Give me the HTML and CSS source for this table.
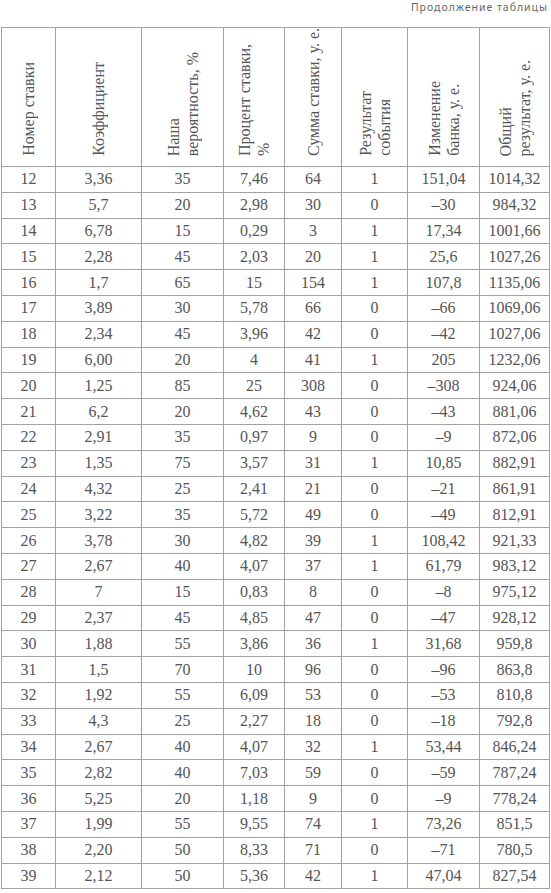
FILE: index.html
```html
<!DOCTYPE html>
<html lang="ru">
<head>
<meta charset="utf-8">
<link rel="stylesheet" href="styles.css">
</head>
<body>
<div class="caption">Продолжение таблицы</div>
<table class="data">
<colgroup>
<col class="c1"><col class="c2"><col class="c3"><col class="c4"><col class="c5"><col class="c6"><col class="c7"><col class="c8">
</colgroup>
<thead>
<tr>
<th><div class="rot">Номер ставки</div></th>
<th><div class="rot">Коэффициент</div></th>
<th><div class="rot">Наша<br>вероятность, %</div></th>
<th><div class="rot">Процент ставки,<br>%</div></th>
<th><div class="rot">Сумма ставки, у. е.</div></th>
<th><div class="rot">Результат<br>события</div></th>
<th><div class="rot">Изменение<br>банка, у. е.</div></th>
<th><div class="rot">Общий<br>результат, у. е.</div></th>
</tr>
</thead>
<tbody>
<tr><td>12</td><td>3,36</td><td>35</td><td>7,46</td><td>64</td><td>1</td><td>151,04</td><td>1014,32</td></tr>
<tr><td>13</td><td>5,7</td><td>20</td><td>2,98</td><td>30</td><td>0</td><td>–30</td><td>984,32</td></tr>
<tr><td>14</td><td>6,78</td><td>15</td><td>0,29</td><td>3</td><td>1</td><td>17,34</td><td>1001,66</td></tr>
<tr><td>15</td><td>2,28</td><td>45</td><td>2,03</td><td>20</td><td>1</td><td>25,6</td><td>1027,26</td></tr>
<tr><td>16</td><td>1,7</td><td>65</td><td>15</td><td>154</td><td>1</td><td>107,8</td><td>1135,06</td></tr>
<tr><td>17</td><td>3,89</td><td>30</td><td>5,78</td><td>66</td><td>0</td><td>–66</td><td>1069,06</td></tr>
<tr><td>18</td><td>2,34</td><td>45</td><td>3,96</td><td>42</td><td>0</td><td>–42</td><td>1027,06</td></tr>
<tr><td>19</td><td>6,00</td><td>20</td><td>4</td><td>41</td><td>1</td><td>205</td><td>1232,06</td></tr>
<tr><td>20</td><td>1,25</td><td>85</td><td>25</td><td>308</td><td>0</td><td>–308</td><td>924,06</td></tr>
<tr><td>21</td><td>6,2</td><td>20</td><td>4,62</td><td>43</td><td>0</td><td>–43</td><td>881,06</td></tr>
<tr><td>22</td><td>2,91</td><td>35</td><td>0,97</td><td>9</td><td>0</td><td>–9</td><td>872,06</td></tr>
<tr><td>23</td><td>1,35</td><td>75</td><td>3,57</td><td>31</td><td>1</td><td>10,85</td><td>882,91</td></tr>
<tr><td>24</td><td>4,32</td><td>25</td><td>2,41</td><td>21</td><td>0</td><td>–21</td><td>861,91</td></tr>
<tr><td>25</td><td>3,22</td><td>35</td><td>5,72</td><td>49</td><td>0</td><td>–49</td><td>812,91</td></tr>
<tr><td>26</td><td>3,78</td><td>30</td><td>4,82</td><td>39</td><td>1</td><td>108,42</td><td>921,33</td></tr>
<tr><td>27</td><td>2,67</td><td>40</td><td>4,07</td><td>37</td><td>1</td><td>61,79</td><td>983,12</td></tr>
<tr><td>28</td><td>7</td><td>15</td><td>0,83</td><td>8</td><td>0</td><td>–8</td><td>975,12</td></tr>
<tr><td>29</td><td>2,37</td><td>45</td><td>4,85</td><td>47</td><td>0</td><td>–47</td><td>928,12</td></tr>
<tr><td>30</td><td>1,88</td><td>55</td><td>3,86</td><td>36</td><td>1</td><td>31,68</td><td>959,8</td></tr>
<tr><td>31</td><td>1,5</td><td>70</td><td>10</td><td>96</td><td>0</td><td>–96</td><td>863,8</td></tr>
<tr><td>32</td><td>1,92</td><td>55</td><td>6,09</td><td>53</td><td>0</td><td>–53</td><td>810,8</td></tr>
<tr><td>33</td><td>4,3</td><td>25</td><td>2,27</td><td>18</td><td>0</td><td>–18</td><td>792,8</td></tr>
<tr><td>34</td><td>2,67</td><td>40</td><td>4,07</td><td>32</td><td>1</td><td>53,44</td><td>846,24</td></tr>
<tr><td>35</td><td>2,82</td><td>40</td><td>7,03</td><td>59</td><td>0</td><td>–59</td><td>787,24</td></tr>
<tr><td>36</td><td>5,25</td><td>20</td><td>1,18</td><td>9</td><td>0</td><td>–9</td><td>778,24</td></tr>
<tr><td>37</td><td>1,99</td><td>55</td><td>9,55</td><td>74</td><td>1</td><td>73,26</td><td>851,5</td></tr>
<tr><td>38</td><td>2,20</td><td>50</td><td>8,33</td><td>71</td><td>0</td><td>–71</td><td>780,5</td></tr>
<tr><td>39</td><td>2,12</td><td>50</td><td>5,36</td><td>42</td><td>1</td><td>47,04</td><td>827,54</td></tr>
</tbody>
</table>
</body>
</html>
```

FILE: styles.css
```css
html, body {
  margin: 0;
  padding: 0;
  background: #ffffff;
}

.caption {
  height: 27px;
  box-sizing: border-box;
  padding: 1px 3px 0 0;
  text-align: right;
  font-family: "Noto Sans", "DejaVu Sans", sans-serif;
  font-size: 10.5px;
  line-height: 13px;
  letter-spacing: 1px;
  color: #666666;
}

.data {
  border-collapse: collapse;
  table-layout: fixed;
  width: 548px;
  margin-left: 1px;
  font-family: "Liberation Serif", "Times New Roman", serif;
  font-size: 16px;
  color: #555555;
}

.c1 { width: 54px; }
.c2 { width: 86px; }
.c3 { width: 82px; }
.c4 { width: 61px; }
.c5 { width: 57px; }
.c6 { width: 66px; }
.c7 { width: 72px; }
.c8 { width: 70px; }

.data th,
.data td {
  border: 1px solid #a2a2a2;
  padding: 0;
  text-align: center;
}

.data th {
  height: 131px;
  vertical-align: bottom;
  font-weight: normal;
  padding-bottom: 6px;
}

.rot {
  display: inline-block;
  writing-mode: vertical-rl;
  transform: rotate(180deg);
  white-space: nowrap;
  text-align: left;
  line-height: 19px;
}

.data td {
  height: 24.8px;
  line-height: 18px;
  vertical-align: middle;
}
```
